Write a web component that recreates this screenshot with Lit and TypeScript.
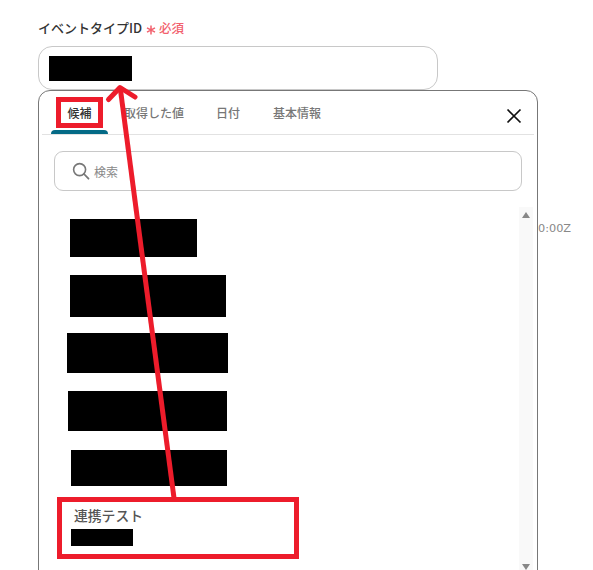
import { LitElement, html, css, svg } from "lit";
import { customElement } from "lit/decorators.js";

const ROWS = [
  { w: 127, h: 38, x: 70, gap: 28 },
  { w: 156, h: 42, x: 70, gap: 18 },
  { w: 161, h: 40, x: 67, gap: 16 },
  { w: 159, h: 40, x: 68, gap: 18 },
  { w: 156, h: 36, x: 71, gap: 19 },
];

@customElement("app-root")
export class AppRoot extends LitElement {
  static styles = css`
    :host {
      display: block;
      position: relative;
      width: 593px;
      height: 570px;
      overflow: hidden;
      background: #fff;
      font-family: "Noto Sans CJK JP", "Noto Sans", sans-serif;
      color: #333;
    }
    .form {
      display: flex;
      flex-direction: column;
      padding: 20px 0 0 38px;
      width: 500px;
    }
    .label {
      display: flex;
      align-items: center;
      height: 16px;
      font-size: 13px;
      font-weight: 500;
      line-height: 16px;
      color: #333;
    }
    .star {
      width: 10px;
      height: 10px;
      margin: 3px 3px 0 4px;
      flex: none;
    }
    .req {
      font-size: 12.5px;
      color: #f2616e;
    }
    .input {
      box-sizing: border-box;
      width: 400px;
      height: 44px;
      margin-top: 10px;
      padding: 9px 0 0 10px;
      border: 1px solid #c8c8c8;
      border-radius: 14px;
      background: #fff;
    }
    .mask {
      background: #000;
    }
    .input .mask {
      width: 83px;
      height: 25px;
    }
    .popup {
      box-sizing: border-box;
      width: 500px;
      height: 560px;
      border: 1px solid #777;
      border-radius: 12px 12px 0 0;
      background: #fff;
      display: flex;
      flex-direction: column;
    }
    .tabs {
      box-sizing: border-box;
      display: flex;
      align-items: flex-start;
      height: 44px;
      margin: 0 3px;
      border-bottom: 1px solid #e2e2e2;
      position: relative;
    }
    .tab {
      font-size: 12px;
      line-height: 18px;
      margin-top: 13px;
      color: #777;
      font-weight: 500;
      white-space: nowrap;
    }
    .tab.on {
      position: relative;
      color: #333;
      width: 57px;
      margin-left: 9px;
      height: 30px;
      text-align: center;
    }
    .tab.on::after {
      content: "";
      position: absolute;
      left: 0;
      right: 0;
      bottom: 0;
      height: 4px;
      background: #046a86;
      border-radius: 4px 4px 0 0;
    }
    .tab.t2 { margin-left: 16px; }
    .tab.t3 { margin-left: 32px; }
    .tab.t4 { margin-left: 33px; }
    .close {
      position: absolute;
      right: 12px;
      top: 17px;
      width: 16px;
      height: 16px;
    }
    .search {
      box-sizing: border-box;
      display: flex;
      align-items: center;
      width: 468px;
      height: 40px;
      margin: 16px 0 0 15px;
      padding-left: 17px;
      border: 1px solid #c8c8c8;
      border-radius: 9px;
      font-size: 12px;
      color: #888;
    }
    .search svg {
      width: 18px;
      height: 18px;
      margin-right: 4px;
      flex: none;
    }
    .body {
      position: relative;
      display: flex;
      flex-direction: column;
      flex: 1;
    }
    .rows {
      display: flex;
      flex-direction: column;
      align-items: flex-start;
    }
    .linked {
      margin: 21px 0 0 35px;
      font-size: 13.8px;
      line-height: 16px;
      font-weight: 500;
      color: #555;
      white-space: nowrap;
    }
    .small-mask {
      width: 62px;
      height: 17px;
      margin: 6px 0 0 32px;
    }
    .scroll {
      position: absolute;
      left: 480px;
      top: 16px;
      width: 14px;
      height: 400px;
      background: #f9f9f9;
    }
    .arrow-up, .arrow-down {
      position: absolute;
      left: 2.5px;
      width: 0;
      height: 0;
      border-left: 4.5px solid transparent;
      border-right: 4.5px solid transparent;
    }
    .arrow-up { top: 5px; border-bottom: 6px solid #888; }
    .arrow-down { top: 357px; border-top: 6px solid #888; }
    .behind {
      position: absolute;
      left: 538px;
      top: 221px;
      font-size: 11.3px;
      line-height: 16px;
      font-family: "DejaVu Sans", sans-serif;
      color: #888;
    }
    .marks {
      position: absolute;
      left: 0;
      top: 0;
      width: 593px;
      height: 570px;
      pointer-events: none;
    }
  `;

  render() {
    return html`
      <div class="form">
        <div class="label">
          イベントタイプID
          <svg class="star" viewBox="0 0 10 10" aria-hidden="true">
            <path d="M5 0.5V9.5M1 2.8L9 7.2M9 2.8L1 7.2" stroke="#f2616e" stroke-width="1.5" fill="none" />
          </svg>
          <span class="req">必須</span>
        </div>
        <div class="input"><div class="mask"></div></div>
        <div class="popup">
          <div class="tabs">
            <div class="tab on">候補</div>
            <div class="tab t2">取得した値</div>
            <div class="tab t3">日付</div>
            <div class="tab t4">基本情報</div>
            <svg class="close" viewBox="0 0 16 16" aria-hidden="true">
              <path d="M1.5 1.5L14.5 14.5M14.5 1.5L1.5 14.5" stroke="#111" stroke-width="1.7" fill="none" />
            </svg>
          </div>
          <div class="search">
            <svg viewBox="0 0 18 18" aria-hidden="true">
              <circle cx="7.6" cy="7.6" r="6" stroke="#777" stroke-width="1.6" fill="none" />
              <path d="M12 12L16.5 16.7" stroke="#777" stroke-width="1.8" fill="none" stroke-linecap="round" />
            </svg>
            検索
          </div>
          <div class="body">
            <div class="rows">
              ${ROWS.map(
                (r) => html`<div
                  class="mask"
                  style="width:${r.w}px;height:${r.h}px;margin:${r.gap}px 0 0 ${r.x - 39}px"
                ></div>`
              )}
            </div>
            <div class="linked">連携テスト</div>
            <div class="mask small-mask"></div>
            <div class="scroll">
              <div class="arrow-up"></div>
              <div class="arrow-down"></div>
            </div>
          </div>
        </div>
      </div>
      <div class="behind">0:00Z</div>
      <svg class="marks" viewBox="0 0 593 570" aria-hidden="true">
        ${svg`
          <rect x="58.5" y="99.5" width="42" height="26" fill="none" stroke="#ed1c2b" stroke-width="5" />
          <rect x="59.5" y="499.5" width="237" height="57" fill="none" stroke="#ed1c2b" stroke-width="5" />
          <path d="M174 498L120.5 90" stroke="#ed1c2b" stroke-width="5" fill="none" />
          <path d="M108.5 99.5L120 87.5L135 97" stroke="#ed1c2b" stroke-width="5" fill="none" stroke-linecap="round" stroke-linejoin="round" />
        `}
      </svg>
    `;
  }
}
